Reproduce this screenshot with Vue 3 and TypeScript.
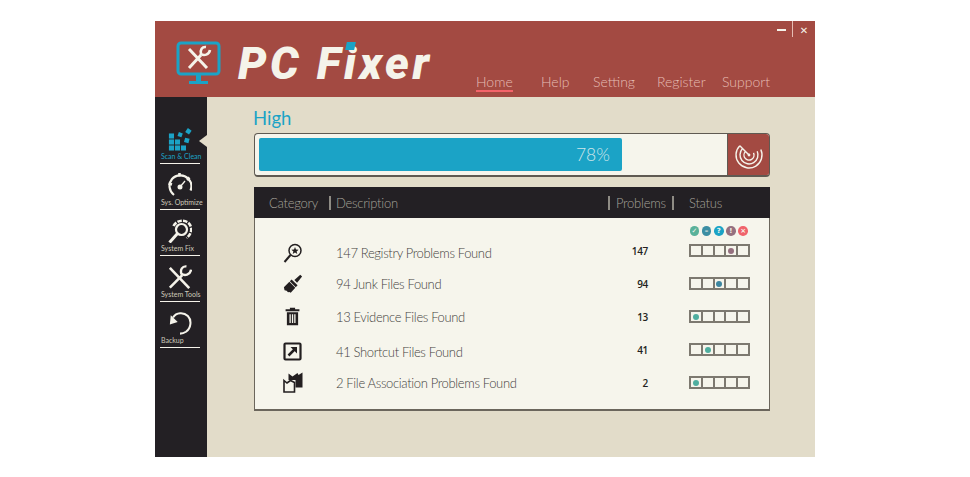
<script setup lang="ts">
interface Row {
  icon: string
  text: string
  count: number
  slot: number
  dot: string
  nudge?: boolean
}

const navItems = ["Home", "Help", "Setting", "Register", "Support"];

const sideItems = [
  { icon: "scan", label: "Scan & Clean", active: true },
  { icon: "gauge", label: "Sys. Optimize" },
  { icon: "fix", label: "System Fix" },
  { icon: "tools", label: "System Tools" },
  { icon: "backup", label: "Backup" },
];

const legend = [
  { glyph: "✓", color: "#59b199" },
  { glyph: "–", color: "#3c8ea3" },
  { glyph: "?", color: "#1ba3c6" },
  { glyph: "!", color: "#95707f" },
  { glyph: "×", color: "#f0636b" },
];

const rows: Row[] = [
  { icon: "search", text: "147 Registry Problems Found", count: 147, slot: 3, dot: "#95707f", nudge: true },
  { icon: "brush", text: "94 Junk Files Found", count: 94, slot: 2, dot: "#3d86a0" },
  { icon: "trash", text: "13 Evidence Files Found", count: 13, slot: 0, dot: "#4fae9f" },
  { icon: "shortcut", text: "41 Shortcut Files Found", count: 41, slot: 1, dot: "#4fae9f", nudge: true },
  { icon: "assoc", text: "2 File Association Problems Found", count: 2, slot: 0, dot: "#4fae9f" },
];
</script>

<template>
  <div class="page">
    <div class="window">
      <header class="header">
        <div class="logo">
          <svg class="logo-icon" width="46" height="44" viewBox="0 0 46 44">
            <rect x="2" y="2" width="41" height="31" rx="3" fill="none" stroke="#1ba3c6" stroke-width="3" />
            <path d="M20 34h5v6h-5zM13 40h19v3H13z" fill="#1ba3c6" />
            <path d="M13 8l18 19" stroke="#f5f3ea" stroke-width="3" fill="none" />
            <path d="M13 27L25 14" stroke="#f5f3ea" stroke-width="3" fill="none" />
            <path d="M30 6c-4-.5-6 3-5 7 3 2 8 1 9-4" stroke="#f5f3ea" stroke-width="2.6" fill="none" />
          </svg>
          <span class="logo-text">PC F<span class="logo-i">i<i class="logo-dot"></i></span>xer</span>
        </div>
        <nav class="nav">
          <a v-for="item in navItems" :key="item" class="nav-item" :class="{ 'nav-item--active': item === 'Home' }">{{ item }}</a>
        </nav>
        <div class="controls">
          <span class="ctl-min"></span>
          <span class="ctl-sep"></span>
          <span class="ctl-close">✕</span>
        </div>
      </header>

      <div class="content">
        <aside class="sidebar">
          <div v-for="item in sideItems" :key="item.label" class="side-item" :class="{ 'side-item--active': item.active }">
            <svg v-if="item.icon === 'scan'" class="side-icon" width="24" height="24" viewBox="0 0 26 26" fill="#1ba3c6">
              <rect x="1" y="7" width="5.5" height="5.5" />
              <rect x="1" y="13.5" width="5.5" height="5.5" />
              <rect x="7.5" y="13.5" width="5.5" height="5.5" />
              <rect x="1" y="20" width="5.5" height="5.5" />
              <rect x="7.5" y="20" width="5.5" height="5.5" />
              <rect x="14" y="20" width="5.5" height="5.5" />
              <rect x="11" y="6" width="4.5" height="4.5" transform="rotate(20 13 8)" />
              <rect x="20" y="2" width="5" height="5" transform="rotate(35 22 4)" />
              <rect x="18" y="12" width="5" height="5" transform="rotate(15 20 14)" />
            </svg>
            <svg v-else-if="item.icon === 'gauge'" class="side-icon" width="24" height="24" viewBox="1 1 24 24" fill="none" stroke="#f5f3ea" stroke-width="2.200">
              <path d="M7 23C2 19 1 12 5 7 9 2.500 17 2 21 6.500 25 10.500 25 15 23.500 18.500" />
              <path d="M13 15l5-6" stroke-width="1.300" />
              <circle cx="13" cy="15" r="1.400" fill="#f5f3ea" />
              <path d="M1.500 11.500l3.500 1M12.500 1v3.500M22.500 5.500l-2.500 2.500" stroke-width="2.600" />
            </svg>
            <svg v-else-if="item.icon === 'fix'" class="side-icon" width="24" height="24" viewBox="1 0 24 24" fill="none" stroke="#f5f3ea" stroke-width="2.200">
              <circle cx="14.500" cy="10.500" r="5.500" />
              <path d="M10.500 14.500L2.500 23.500" stroke-width="3" />
              <path d="M6.500 7C9 2 16 0 21 3.500 26 8 25 15 19.500 19" stroke-dasharray="4.500 1.200" stroke-width="2.600" />
            </svg>
            <svg v-else-if="item.icon === 'tools'" class="side-icon" width="24" height="24" viewBox="0 0 26 26" fill="none" stroke="#f5f3ea" stroke-width="2.800">
              <path d="M2 3l21 22" />
              <path d="M2 24.500L15.500 11" />
              <path d="M20 1.500c-4.500-.5-7 3.500-5.500 8 3.500 2.500 9.500 1.500 10.500-4.500" stroke-width="2.600" />
            </svg>
            <svg v-else class="side-icon" width="24" height="24" viewBox="0 0 26 26" fill="none" stroke="#f5f3ea" stroke-width="2.200">
              <path d="M5.500 7C9 1.500 17 1 21.500 5.500 26 10 25 18.500 19.500 22.500 18 23.500 16 24.500 13 24.500" />
              <path d="M2 14.500L3 4.500 10.500 12z" fill="#f5f3ea" stroke="none" />
            </svg>
            <span class="side-label">{{ item.label }}</span>
          </div>
          <span class="side-arrow"></span>
        </aside>

        <main class="main">
          <h1 class="level">High</h1>

          <div class="progress">
            <div class="progress-track">
              <div class="progress-bar" :style="{ width: '78.2%' }">78%</div>
            </div>
            <div class="progress-btn">
              <svg width="32" height="32" viewBox="0 0 32 32" fill="none" stroke="#f5f3ea" stroke-width="1.400">
                <path d="M6.800 6.800A13 13 0 1 0 27.800 10.500" />
                <path d="M9.600 9.600A9 9 0 1 0 24.200 12.200" />
                <path d="M12.500 12.500A5 5 0 1 0 20.500 13.900" />
                <path d="M6.800 6.800L16 16" />
                <circle cx="16" cy="16" r="1.400" fill="#f5f3ea" stroke="none" />
              </svg>
            </div>
          </div>

          <section class="table">
            <div class="thead">
              <span class="th th-cat">Category</span>
              <span class="th th-desc">Description</span>
              <span class="th th-prob">Problems</span>
              <span class="th th-status">Status</span>
            </div>
            <div class="tbody">
              <div class="legend">
                <span v-for="l in legend" :key="l.glyph" class="legend-dot" :style="{ background: l.color }">{{ l.glyph }}</span>
              </div>
              <div class="rows">
                <div v-for="row in rows" :key="row.icon" class="row">
                  <span class="row-icon" :class="{ 'row-nudge': row.nudge }">
                    <svg v-if="row.icon === 'search'" width="22" height="22" viewBox="0 0 22 22">
                      <circle cx="13" cy="8.500" r="6" fill="none" stroke="#231f20" stroke-width="1.500" />
                      <path d="M13 5l1 2.500 2.600.2-2 1.700.7 2.600-2.300-1.400-2.300 1.400.7-2.600-2-1.700 2.600-.2z" fill="#231f20" />
                      <path d="M8.500 13L2.500 20" stroke="#231f20" stroke-width="2" />
                    </svg>
                    <svg v-else-if="row.icon === 'brush'" width="20" height="20" viewBox="0 0 22 22" fill="#231f20">
                      <path d="M12.500 6.500L19 .8l2 2-5.500 6.700z" />
                      <path d="M9.500 6L16 12.500 14 14.500 7.500 8z" />
                      <path d="M7 8.500l6.500 6.500-5 5.500-1.500-.8-1.500.5-1.500-1.700-2.300-.5L1 14.500z" />
                    </svg>
                    <svg v-else-if="row.icon === 'trash'" width="19" height="19" viewBox="0 0 22 22" fill="#231f20">
                      <path d="M8 1h6v1.500h5V5H3V2.500h5z" />
                      <path fill-rule="evenodd" d="M4.500 6h13v15h-13zM7.500 8.500v10h1.500v-10zM10.300 8.500v10h1.500v-10zM13 8.500v10h1.500v-10z" />
                    </svg>
                    <svg v-else-if="row.icon === 'shortcut'" width="22" height="22" viewBox="0 0 22 22" fill="none" stroke="#231f20">
                      <rect x="2.500" y="2.500" width="16" height="16" rx="1" stroke-width="2.200" />
                      <path d="M6.500 14.500L13 8" stroke-width="2.500" />
                      <path d="M8.500 6h6.500v6.500z" fill="#231f20" stroke="none" />
                    </svg>
                    <svg v-else width="22" height="22" viewBox="0 0 22 22">
                      <path d="M6.500 1.500l4 3 5-3.500 1 2 4-2.500v15h-7V8H6.500z" fill="#231f20" />
                      <path d="M2 8.500l3 2.500 3.500-2.500 4 2v9.500H2z" fill="#f6f5ec" stroke="#231f20" stroke-width="1.600" />
                    </svg>
                  </span>
                  <span class="row-text" :class="{ 'row-nudge': row.nudge }">{{ row.text }}</span>
                  <span class="row-count">{{ row.count }}</span>
                  <div class="cells">
                    <span v-for="n in 5" :key="n" class="cell">
                      <i v-if="n - 1 === row.slot" class="cell-dot" :style="{ background: row.dot }"></i>
                    </span>
                  </div>
                </div>
              </div>
            </div>
          </section>
        </main>
      </div>
    </div>
  </div>
</template>

<style>
html,
body {
  margin: 0;
  background: #fff;
}
</style>

<style scoped>
.page {
  width: 970px;
  height: 477px;
  padding: 21px 155px 20px;
  box-sizing: border-box;
  font-family: Lato, "Open Sans", sans-serif;
}

.window {
  height: 436px;
  display: flex;
  flex-direction: column;
  background: #e2dcc9;
}

.header {
  position: relative;
  height: 76px;
  flex-shrink: 0;
  display: flex;
  justify-content: space-between;
  background: #a34a42;
  padding: 0 45px 0 21px;
  box-sizing: border-box;
}

.logo {
  display: flex;
  align-items: flex-start;
  padding-top: 20px;
  gap: 16px;
}

.logo-icon {
  flex-shrink: 0;
}

.logo-text {
  font-family: Roboto, "Liberation Sans", sans-serif;
  font-style: italic;
  font-weight: 900;
  font-size: 45px;
  line-height: 46px;
  letter-spacing: 3.500px;
  color: #f5f3ea;
  white-space: pre;
}

.logo-i {
  position: relative;
}

.logo-dot {
  position: absolute;
  left: 2px;
  top: 5px;
  width: 9px;
  height: 8px;
  background: #1ba3c6;
  transform: skewX(-12deg);
}

.nav {
  display: grid;
  grid-template-columns: 65px 52px 64px 65px 48px;
  align-items: start;
  justify-items: start;
  padding-top: 53px;
}

.nav-item {
  font-weight: 300;
  font-size: 14px;
  line-height: 16px;
  color: #e6bdb4;
  white-space: nowrap;
  border-bottom: 2px solid transparent;
}

.nav-item--active {
  border-bottom-color: #f4636a;
}

.controls {
  position: absolute;
  top: 0;
  right: 5px;
  height: 16px;
  display: flex;
  align-items: center;
  color: #f5f3ea;
}

.ctl-min {
  width: 9px;
  height: 2px;
  background: #f5f3ea;
  margin-top: 1px;
}

.ctl-sep {
  width: 1px;
  height: 16px;
  background: #e6bdb4;
  margin: 0 6px;
}

.ctl-close {
  font-family: "DejaVu Sans", sans-serif;
  font-size: 10px;
  font-weight: 700;
  margin-top: 2px;
  width: 10px;
  margin-right: 1px;
  text-align: center;
}

.content {
  flex: 1;
  display: flex;
  min-height: 0;
}

.sidebar {
  position: relative;
  width: 52px;
  flex-shrink: 0;
  background: #232024;
  padding: 21px 7px 0 5px;
  box-sizing: border-box;
}

.side-item {
  height: 46px;
  box-sizing: border-box;
  padding-top: 9px;
  border-bottom: 1px solid #f5f3ea;
  display: flex;
  flex-direction: column;
  align-items: center;
  color: #cdc9ba;
}

.side-icon {
  flex-shrink: 0;
}

.side-label {
  align-self: flex-start;
  font-size: 7px;
  line-height: 9px;
  white-space: nowrap;
  margin: 1px 0 0 1px;
}

.side-item--active {
  color: #1ba3c6;
}

.side-arrow {
  position: absolute;
  right: 0;
  top: 38px;
  width: 0;
  height: 0;
  border-style: solid;
  border-width: 6px 8px 6px 0;
  border-color: transparent #e2dcc9 transparent transparent;
}

.main {
  flex: 1;
  padding: 8px 45px 0 47px;
  min-width: 0;
}

.level {
  margin: 0 0 0 -1px;
  font-weight: 400;
  font-size: 18.500px;
  line-height: 27px;
  color: #1ba3c6;
}

.progress {
  height: 44px;
  margin-top: 1px;
  display: flex;
  box-sizing: border-box;
  border: 1px solid #5f5a52;
  border-bottom-width: 2px;
  border-radius: 4px;
  background: #f6f5ec;
  overflow: hidden;
}

.progress-track {
  flex: 1;
  padding: 4px;
}

.progress-bar {
  height: 33px;
  background: #1ba3c6;
  border-radius: 2px;
  color: #cfe6ea;
  font-weight: 300;
  font-size: 17.500px;
  line-height: 33px;
  text-align: right;
  padding-right: 12px;
  box-sizing: border-box;
}

.progress-btn {
  width: 41px;
  background: #a34a42;
  border-left: 1px solid #5f5a52;
  display: flex;
  align-items: center;
  justify-content: center;
}

.table {
  margin-top: 10px;
  height: 224px;
  display: flex;
  flex-direction: column;
  box-sizing: border-box;
  border-bottom: 2px solid #6b665c;
  border-left: 1px solid #6b665c;
  border-right: 1px solid #6b665c;
  background: #f6f5ec;
}

.thead {
  height: 31px;
  margin: 0 -1px;
  flex-shrink: 0;
  display: flex;
  align-items: center;
  background: #232024;
  color: #a5a29a;
  font-weight: 300;
  font-size: 13px;
  letter-spacing: -0.250px;
}

.th {
  box-sizing: border-box;
  line-height: 14px;
  white-space: nowrap;
}

.th-cat {
  width: 75px;
  padding-left: 15px;
}

.th-desc {
  width: 279px;
  padding-left: 5px;
  border-left: 2px solid #8f8c85;
}

.th-prob {
  width: 66px;
  padding-left: 6px;
  border-left: 2px solid #8f8c85;
  border-right: 2px solid #8f8c85;
}

.th-status {
  padding-left: 15px;
}

.tbody {
  flex: 1;
  padding-top: 8px;
}

.legend {
  height: 10px;
  display: flex;
  gap: 2.500px;
  justify-content: flex-end;
  padding-right: 21px;
}

.legend-dot {
  width: 9.700px;
  height: 9.700px;
  border-radius: 50%;
  color: #f5f3ea;
  font-family: "DejaVu Sans", sans-serif;
  font-weight: 700;
  font-size: 7px;
  line-height: 10px;
  text-align: center;
  overflow: hidden;
}

.rows {
  margin-top: -2px;
}

.row {
  height: 33px;
  display: grid;
  grid-template-columns: 75px 258px 60px 1fr;
  align-items: center;
}

.row-icon {
  display: flex;
  justify-content: center;
}

.row-text {
  padding-left: 6px;
  font-weight: 300;
  font-size: 13px;
  letter-spacing: -0.350px;
  color: #45423e;
  white-space: nowrap;
  line-height: 16px;
}

.row-nudge {
  margin-top: 4px;
}

.row-count {
  text-align: right;
  font-family: "Open Sans", sans-serif;
  font-weight: 600;
  font-size: 10px;
  letter-spacing: -0.300px;
  color: #231f20;
}

.cells {
  display: flex;
  margin-left: 41px;
  width: 61px;
  height: 13px;
  box-sizing: border-box;
  border: 2px solid #7d7970;
  border-left: none;
}

.cell {
  flex: 1;
  border-left: 2px solid #7d7970;
  display: flex;
  align-items: center;
  justify-content: center;
}

.cell-dot {
  width: 6px;
  height: 6px;
  border-radius: 50%;
}
</style>
